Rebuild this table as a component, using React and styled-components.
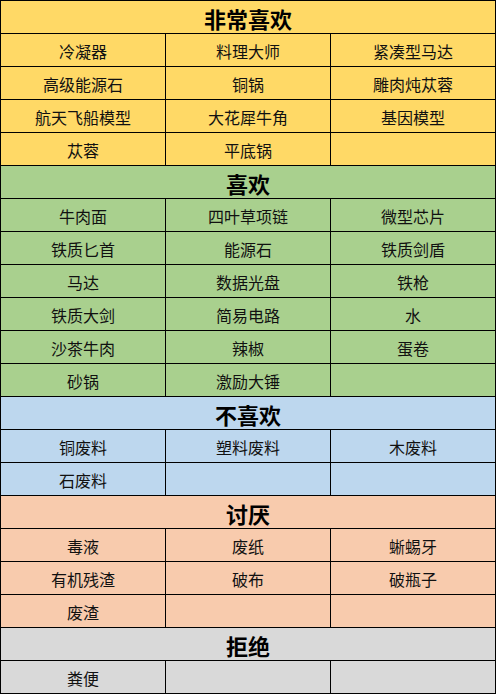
import React from "react";
import styled, { createGlobalStyle } from "styled-components";

const GlobalStyle = createGlobalStyle`
  html, body {
    margin: 0;
    padding: 0;
    background: #ffffff;
  }
  body {
    font-family: "Noto Sans CJK SC", "Noto Sans", sans-serif;
  }
`;

const sections = [
  {
    title: "非常喜欢",
    color: "#ffd966",
    items: ["冷凝器", "料理大师", "紧凑型马达", "高级能源石", "铜锅", "雕肉炖苁蓉", "航天飞船模型", "大花犀牛角", "基因模型", "苁蓉", "平底锅"],
  },
  {
    title: "喜欢",
    color: "#a9d08e",
    items: ["牛肉面", "四叶草项链", "微型芯片", "铁质匕首", "能源石", "铁质剑盾", "马达", "数据光盘", "铁枪", "铁质大剑", "简易电路", "水", "沙茶牛肉", "辣椒", "蛋卷", "砂锅", "激励大锤"],
  },
  {
    title: "不喜欢",
    color: "#bdd7ee",
    items: ["铜废料", "塑料废料", "木废料", "石废料"],
  },
  {
    title: "讨厌",
    color: "#f8cbad",
    items: ["毒液", "废纸", "蜥蜴牙", "有机残渣", "破布", "破瓶子", "废渣"],
  },
  {
    title: "拒绝",
    color: "#d9d9d9",
    items: ["粪便"],
  },
];

function Preferences() {
  return (
    <Table>
      {sections.map((s) => {
        const cells = [...s.items];
        while (cells.length % 3 !== 0) cells.push("");
        return (
          <React.Fragment key={s.title}>
            <Header $bg={s.color}>{s.title}</Header>
            {cells.map((c, i) => (
              <Cell key={s.title + i} $bg={s.color}>
                {c}
              </Cell>
            ))}
          </React.Fragment>
        );
      })}
    </Table>
  );
}

const Table = styled.div`
  display: grid;
  grid-template-columns: repeat(3, 164px);
  grid-auto-rows: 32px;
  gap: 1px;
  padding: 1px;
  width: 494px;
  background: #000000;
`;

const Cell = styled.div`
  display: flex;
  align-items: center;
  justify-content: center;
  background: ${(p) => p.$bg};
  color: #111111;
  font-size: 16px;
  line-height: 1;
  padding-top: 2px;
  box-sizing: border-box;
`;

const Header = styled(Cell)`
  grid-column: 1 / -1;
  font-size: 22px;
  font-weight: 700;
  color: #000000;
`;

export default function App() {
  return (
    <>
      <GlobalStyle />
      <Preferences />
    </>
  );
}
